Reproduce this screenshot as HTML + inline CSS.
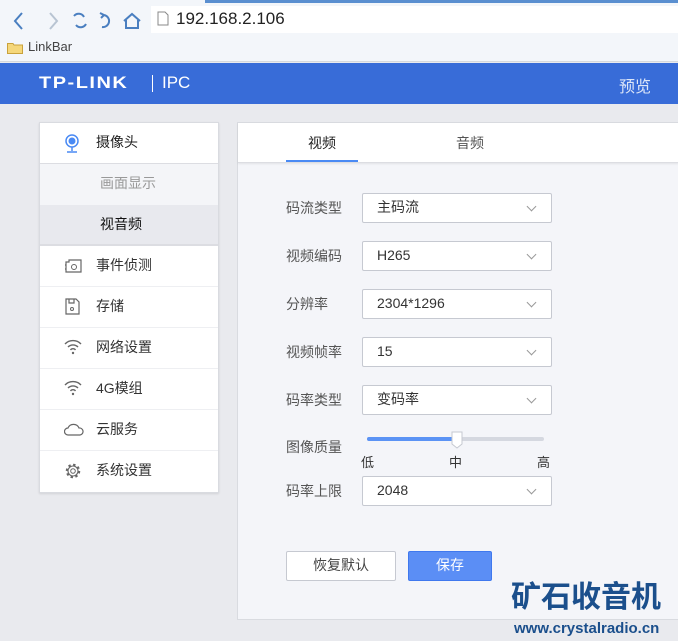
<!DOCTYPE html>
<html><head><meta charset="utf-8"><style>
*{margin:0;padding:0;box-sizing:border-box}
html,body{width:678px;height:641px;overflow:hidden}
body{background:#e9eaee;font-family:"Liberation Sans","Noto Sans CJK SC",sans-serif;position:relative;font-size:14px;color:#333}
.abs{position:absolute}
#chrome{left:0;top:0;width:678px;height:62px;background:#f3f6fa;border-bottom:1px solid #d5d8dd}
#url{left:151px;top:6px;width:527px;height:27px;background:#fff}
#hdr{left:0;top:63px;width:678px;height:41px;background:#386cd8}
#side{left:39px;top:122px;width:180px;height:371px;background:#fff;border:1px solid #d9dbe0;box-shadow:0 1px 2px rgba(0,0,0,.1)}
.row{position:absolute;left:0;width:178px;height:41px;border-bottom:1px solid #eeeff2;line-height:38px}
.row span{position:absolute;left:56px}
.row svg{position:absolute;left:24px;top:11px}
#main{left:237px;top:122px;width:441px;height:498px;background:#f4f5f9;border:1px solid #d9dbe0;border-right:none}
#tabs{left:0;top:0;width:441px;height:40px;background:#fff;border-bottom:1px solid #dcdde2;box-shadow:0 1px 2px rgba(0,0,0,.08)}
.lbl{position:absolute;left:48px;font-size:14px;color:#555}
.sel{position:absolute;left:124px;width:190px;height:30px;background:#fff;border:1px solid #c6c9d1;border-radius:2px;line-height:27px;padding-left:14px;color:#333}
.sel:after{content:"";position:absolute;right:16px;top:9px;width:6px;height:6px;border-right:1px solid #999;border-bottom:1px solid #999;transform:rotate(45deg)}
.btn{position:absolute;top:428px;height:30px;line-height:27px;text-align:center;border-radius:2px}
</style></head><body>
<div id="chrome" class="abs">
 <svg class="abs" style="left:8px;top:10px" width="140" height="22" viewBox="0 0 140 22" fill="none" stroke-width="2">
  <path d="M14 3 L7 11 L14 19" stroke="#4a7fc0"/>
  <path d="M42 3 L49 11 L42 19" stroke="#b8c4d2"/>
  <path d="M66 6 a6 6 0 0 1 10 1 M78 14 a6 6 0 0 1 -10 1" stroke="#4a7fc0"/>
  <path d="M96 5 a6 6 0 1 1 -2 12 M96 5 l-4 -2 M96 5 l-3 3" stroke="#4a7fc0"/>
  <path d="M116 11 L124 4 L132 11 M118 10 V18 H130 V10" stroke="#4a7fc0"/>
 </svg>
 <div id="url" class="abs"></div>
 <svg class="abs" style="left:157px;top:11px" width="12" height="15"><path d="M1 1H8L11 4V14H1Z" fill="#fff" stroke="#888"/></svg>
 <div class="abs" style="left:176px;top:9px;font-size:17px;color:#222">192.168.2.106</div>
 <svg class="abs" style="left:7px;top:41px" width="16" height="13"><path d="M0.5 2.5H6L7 4H15.5V12.5H0.5Z" fill="#f5d77a" stroke="#c9a23c"/></svg>
 <div class="abs" style="left:28px;top:39px;font-size:13px;color:#444">LinkBar</div>
</div>
<div class="abs" style="left:205px;top:0;width:473px;height:3px;background:#5a8fd0"></div>
<div id="hdr" class="abs">
 <div class="abs" style="left:39px;top:9px;color:#fff;font-weight:bold;font-size:20px;letter-spacing:1.5px;transform:scaleY(0.85)">TP-LINK</div>
 <div class="abs" style="left:152px;top:12px;width:1px;height:17px;background:#fff"></div>
 <div class="abs" style="left:162px;top:10px;color:#fff;font-size:17px">IPC</div>
 <div class="abs" style="left:619px;top:10px;color:#dde6f8;font-size:16px">预览</div>
</div>
<div id="side" class="abs">
 <div class="row" style="top:0;border-bottom:1px solid #dcdde2"><svg width="16" height="20"><circle cx="8" cy="7" r="6" fill="none" stroke="#4a8af4" stroke-width="1.5"/><circle cx="8" cy="7" r="3.5" fill="#4a8af4"/><path d="M8 13V17M3 18H13" stroke="#4a8af4" stroke-width="1.5"/></svg><span style="color:#222">摄像头</span></div>
 <div class="row" style="top:41px;background:#f4f5f8;border:none;color:#999"><span style="left:60px">画面显示</span></div>
 <div class="row" style="top:82px;background:#e8e9ee;border-bottom:2px solid #dcdde2;color:#111"><span style="left:60px">视音频</span></div>
 <div class="row" style="top:123px"><svg width="20" height="18"><path d="M2 5H5V3H17V15H2Z M2 8H1M2 12H1" fill="none" stroke="#666" stroke-width="1.2"/><circle cx="10" cy="10" r="2.5" fill="none" stroke="#666"/></svg><span>事件侦测</span></div>
 <div class="row" style="top:164px"><svg width="18" height="18"><path d="M2 1H12L15 4V16H2Z M5 1V5H10V1" fill="none" stroke="#666" stroke-width="1.2"/><circle cx="8" cy="11" r="1.5" fill="none" stroke="#666"/></svg><span>存储</span></div>
 <div class="row" style="top:205px"><svg width="18" height="16"><path d="M1 5a11 11 0 0 1 16 0M4 8a7 7 0 0 1 10 0M6.5 11a3 3 0 0 1 5 0" fill="none" stroke="#666" stroke-width="1.4"/><circle cx="9" cy="14" r="1.2" fill="#666"/></svg><span>网络设置</span></div>
 <div class="row" style="top:246px"><svg width="18" height="16"><path d="M1 5a11 11 0 0 1 16 0M4 8a7 7 0 0 1 10 0M6.5 11a3 3 0 0 1 5 0" fill="none" stroke="#666" stroke-width="1.4"/><circle cx="9" cy="14" r="1.2" fill="#666"/></svg><span>4G模组</span></div>
 <div class="row" style="top:287px"><svg width="20" height="16"><path d="M4 14a3.5 3.5 0 0 1 0-7a6 6 0 0 1 11 0a3.5 3.5 0 0 1 1 7Z" fill="none" stroke="#666" stroke-width="1.2"/></svg><span>云服务</span></div>
 <div class="row" style="top:328px;border:none"><svg width="18" height="18"><circle cx="9" cy="9" r="6" fill="none" stroke="#666" stroke-width="2.5" stroke-dasharray="2.3 2.4"/><circle cx="9" cy="9" r="5" fill="none" stroke="#666" stroke-width="1.1"/><circle cx="9" cy="9" r="2.3" fill="none" stroke="#666"/></svg><span>系统设置</span></div>
</div>
<div id="main" class="abs">
 <div id="tabs" class="abs">
  <div class="abs" style="left:70px;top:10px;color:#222">视频</div>
  <div class="abs" style="left:48px;top:37px;width:72px;height:2px;background:#4a8af4"></div>
  <div class="abs" style="left:218px;top:10px;color:#555">音频</div>
 </div>
 <div class="lbl" style="top:75px">码流类型</div><div class="sel" style="top:70px">主码流</div>
 <div class="lbl" style="top:123px">视频编码</div><div class="sel" style="top:118px">H265</div>
 <div class="lbl" style="top:171px">分辨率</div><div class="sel" style="top:166px">2304*1296</div>
 <div class="lbl" style="top:219px">视频帧率</div><div class="sel" style="top:214px">15</div>
 <div class="lbl" style="top:267px">码率类型</div><div class="sel" style="top:262px">变码率</div>
 <div class="lbl" style="top:314px">图像质量</div>
 <div class="abs" style="left:129px;top:314px;width:177px;height:4px;background:#d5d8e0;border-radius:2px"></div>
 <div class="abs" style="left:129px;top:314px;width:90px;height:4px;background:#5b93f5;border-radius:2px"></div>
 <svg class="abs" style="left:213px;top:308px" width="12" height="18"><path d="M1 1H11V13L6 17L1 13Z" fill="#fff" stroke="#c6c9d1"/></svg>
 <div class="abs" style="left:123px;top:329px;font-size:13px;color:#333">低</div>
 <div class="abs" style="left:211px;top:329px;font-size:13px;color:#333">中</div>
 <div class="abs" style="left:299px;top:329px;font-size:13px;color:#333">高</div>
 <div class="lbl" style="top:358px">码率上限</div><div class="sel" style="top:353px">2048</div>
 <div class="btn" style="left:48px;width:110px;background:#fff;border:1px solid #c6c9d1;color:#444">恢复默认</div>
 <div class="btn" style="left:170px;width:84px;background:#5b8ef5;border:1px solid #3f78ee;color:#fff">保存</div>
</div>
<div class="abs" style="left:511px;top:580px;font-size:30px;font-weight:bold;color:#1b4f8c;line-height:36px;white-space:nowrap">矿石收音机</div>
<div class="abs" style="left:514px;top:620px;font-size:15px;font-weight:bold;color:#1b4f8c;line-height:18px;white-space:nowrap">www.crystalradio.cn</div>
</body></html>
